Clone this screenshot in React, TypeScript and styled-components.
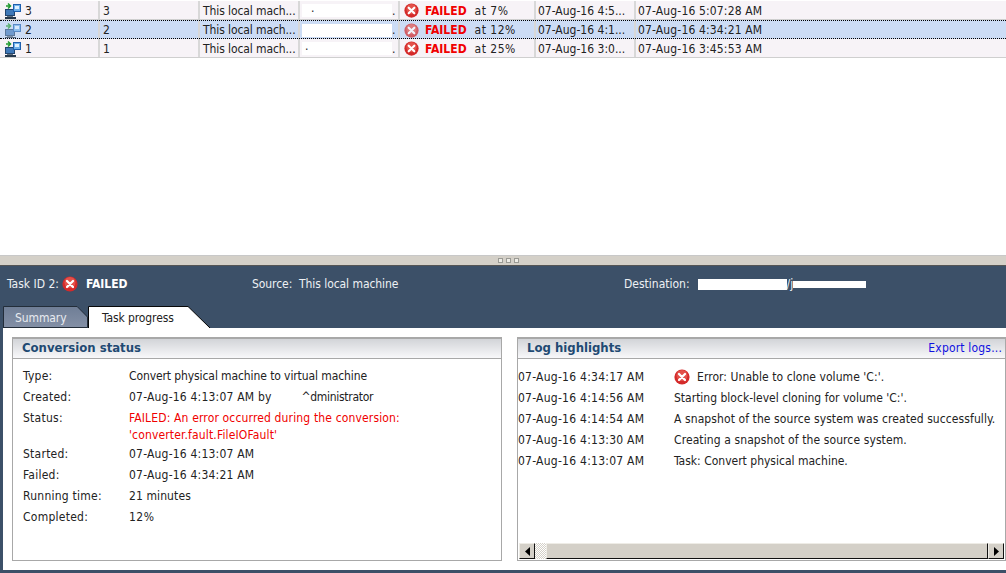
import { createGlobalStyle, styled } from "styled-components";

const GlobalStyle = createGlobalStyle`
  html, body { margin: 0; padding: 0; background: #fff; }
  body { font-family: "DejaVu Sans Condensed", "DejaVu Sans", sans-serif; font-size: 12px; color: #222; }
`;

const rows = [
  { id: "3", dot: ".", dotAt: 9, pct: "at 7%", start: "07-Aug-16 4:5...", end: "07-Aug-16 5:07:28 AM" },
  { id: "2", dot: "", dotAt: 3, pct: "at 12%", start: "07-Aug-16 4:1...", end: "07-Aug-16 4:34:21 AM", selected: true },
  { id: "1", dot: ".", dotAt: 3, pct: "at 25%", start: "07-Aug-16 3:0...", end: "07-Aug-16 3:45:53 AM" },
];

const statusRows = [
  { label: "Type:", value: "Convert physical machine to virtual machine", spacing: -0.1 },
  { label: "Created:", value: "07-Aug-16 4:13:07 AM by", spacing: 0.2, user: "^dministrator" },
  { label: "Status:", value: "FAILED: An error occurred during the conversion:\n'converter.fault.FileIOFault'", spacing: 0.15, error: true },
  { label: "Started:", value: "07-Aug-16 4:13:07 AM", spacing: 0.2 },
  { label: "Failed:", value: "07-Aug-16 4:34:21 AM", spacing: 0.2 },
  { label: "Running time:", value: "21 minutes", spacing: 0.1 },
  { label: "Completed:", value: "12%", spacing: 0.5 },
];

const logRows = [
  { time: "07-Aug-16 4:34:17 AM", text: "Error: Unable to clone volume 'C:'.", spacing: 0.06, failed: true },
  { time: "07-Aug-16 4:14:56 AM", text: "Starting block-level cloning for volume 'C:'.", spacing: 0 },
  { time: "07-Aug-16 4:14:54 AM", text: "A snapshot of the source system was created successfully.", spacing: 0.09 },
  { time: "07-Aug-16 4:13:30 AM", text: "Creating a snapshot of the source system.", spacing: 0.1 },
  { time: "07-Aug-16 4:13:07 AM", text: "Task: Convert physical machine.", spacing: 0 },
];

const FailIcon = ({ size = 15, faded = false }: { size?: number; faded?: boolean }) => (
  <svg width={size} height={size} viewBox="0 0 16 16" style={{ flex: "none", opacity: faded ? 0.7 : 1 }}>
    <circle cx="8" cy="8" r="7.6" fill="#d42a2a" />
    <circle cx="8" cy="6.500" r="5.500" fill="#ea6258" opacity="0.7" />
    <path d="M5 5l6 6M11 5l-6 6" stroke="#fff" strokeWidth="2.300" strokeLinecap="round" />
  </svg>
);

const TaskIcon = ({ faded = false }: { faded?: boolean }) => (
  <svg width="19" height="17" viewBox="0 0 19 17" style={{ flex: "none", opacity: faded ? 0.65 : 1 }}>
    <rect x="2.500" y="7.500" width="9" height="6" fill="#3f78b8" stroke="#23456e" />
    <rect x="4" y="14" width="6" height="1" fill="#5f6f80" />
    <rect x="2" y="15" width="11" height="2" fill="#26384c" />
    <rect x="10.500" y="2.500" width="7" height="7" fill="#6fb0ea" stroke="#1d5fae" />
    <rect x="12" y="4" width="4" height="3" fill="#dff0ff" />
    <path d="M3 4h4M5 1.500L7.500 4 5 6.500" fill="none" stroke="#1f9a2e" strokeWidth="1.500" />
  </svg>
);

export default function App() {
  return (
    <Page>
      <GlobalStyle />
      <JobTable>
        {rows.map((r) => (
          <JobRow key={r.id} $selected={r.selected}>
            <Cell>
              <TaskIcon faded={r.selected} />
              <IconLabel>{r.id}</IconLabel>
            </Cell>
            <Cell>{r.id}</Cell>
            <SourceCell>This local mach...</SourceCell>
            <RedactCell>
              <Smudge style={{ paddingLeft: r.dotAt }}>{r.dot}</Smudge>
              <span>.</span>
            </RedactCell>
            <StatusCell>
              <FailIcon faded={r.selected} />
              <FailedWord>FAILED</FailedWord>
              <Percent>{r.pct}</Percent>
            </StatusCell>
            <DateCell>{r.start}</DateCell>
            <DateCell $spacing={0.15}>{r.end}</DateCell>
          </JobRow>
        ))}
      </JobTable>

      <Splitter>
        <Grip />
        <Grip />
        <Grip />
      </Splitter>

      <Detail>
        <TaskHeader>
          <TaskId>
            Task ID 2:
            <FailIcon size={16} />
            <TaskState>FAILED</TaskState>
          </TaskId>
          <TaskSource>Source:&nbsp; This local machine</TaskSource>
          <TaskDest>
            Destination:
            <DestSmudge $width={89} $height={11} />
            /j
            <DestSmudge $width={73} $height={7} />
          </TaskDest>
        </TaskHeader>

        <TabBar>
          <Tab>
            <TabShape viewBox="0 0 86 22" preserveAspectRatio="none">
              <defs>
                <linearGradient id="tabFill" x1="0" y1="0" x2="0" y2="1">
                  <stop offset="0" stopColor="#6f7e96" />
                  <stop offset="1" stopColor="#8490a6" />
                </linearGradient>
              </defs>
              <path d="M0.500 22V0.500H75L85.500 11V21.500H0.500" fill="url(#tabFill)" stroke="#222c38" />
            </TabShape>
            <TabLabel $light>Summary</TabLabel>
          </Tab>
          <ActiveTab>
            <TabShape viewBox="0 0 122 23" preserveAspectRatio="none">
              <path d="M0.500 23V0.500H100L122 23Z" fill="#fff" stroke="none" />
              <path d="M0.500 23V0.500H100L122 23" fill="none" stroke="#000" />
            </TabShape>
            <TabLabel>Task progress</TabLabel>
          </ActiveTab>
        </TabBar>

        <Content>
          <Panel>
            <PanelHead>
              <PanelTitle>Conversion status</PanelTitle>
            </PanelHead>
            <StatusList>
              {statusRows.map((s) => (
                <StatusRow key={s.label} $tight={s.error}>
                  <StatusLabel>{s.label}</StatusLabel>
                  <StatusValue $error={s.error} $spacing={s.spacing}>
                    {s.value}
                  </StatusValue>
                  {s.user && <UserName>{s.user}</UserName>}
                </StatusRow>
              ))}
            </StatusList>
          </Panel>

          <Panel>
            <PanelHead>
              <PanelTitle>Log highlights</PanelTitle>
              <ExportLink>Export logs...</ExportLink>
            </PanelHead>
            <LogList>
              {logRows.map((l) => (
                <LogRow key={l.time}>
                  <LogTime>{l.time}</LogTime>
                  {l.failed && (
                    <LogIconSlot>
                      <FailIcon size={16} />
                    </LogIconSlot>
                  )}
                  <LogText $spacing={l.spacing}>{l.text}</LogText>
                </LogRow>
              ))}
            </LogList>
            <ScrollBar>
              <ScrollButton>
                <svg width="5" height="9" viewBox="0 0 5 9">
                  <path d="M5 0v9L0 4.500z" fill="#000" />
                </svg>
              </ScrollButton>
              <ScrollTrack />
              <ScrollThumb />
              <ScrollButton>
                <svg width="5" height="9" viewBox="0 0 5 9">
                  <path d="M0 0v9l5-4.500z" fill="#000" />
                </svg>
              </ScrollButton>
            </ScrollBar>
          </Panel>
        </Content>
      </Detail>
    </Page>
  );
}

const Page = styled.div`
  width: 1006px;
  height: 573px;
  display: flex;
  flex-direction: column;
  overflow: hidden;
  background: #fff;
`;

const JobTable = styled.div`
  flex: none;
  padding-top: 1px;
  box-sizing: border-box;
  border-bottom: 1px solid #c8c8c8;
  height: 256px;
`;

const JobRow = styled.div<{ $selected?: boolean }>`
  display: grid;
  grid-template-columns: 100px 100px 100px 100px 136px 100px 1fr;
  height: 19px;
  box-sizing: border-box;
  background: ${(p) => (p.$selected ? "#ccdcf5" : "#f7f3f7")};
  border-bottom: 1px ${(p) => (p.$selected ? "dotted #000" : "solid #cfcfcf")};
  border-top: ${(p) => (p.$selected ? "1px dotted #000" : "none")};
  line-height: 18px;
  color: #222;
`;

const Cell = styled.div`
  display: flex;
  align-items: center;
  padding: 1px 0 0 3px;
  border-right: 2px solid #d8d8d8;
  white-space: pre;
  overflow: hidden;
  &:last-child { border-right: none; }
`;

const IconLabel = styled.span`
  margin-left: 3px;
`;

const SourceCell = styled(Cell)`
  letter-spacing: -0.1px;
`;

const RedactCell = styled(Cell)`
  padding-left: 0;
`;

const StatusCell = styled(Cell)`
  padding-left: 4px;
`;

const DateCell = styled(Cell)<{ $spacing?: number }>`
  padding-left: 2px;
  letter-spacing: ${(p) => p.$spacing ?? 0}px;
`;

const FailedWord = styled.span`
  color: #f00000;
  font-weight: 700;
  margin: 0 8px 0 6px;
`;

const Percent = styled.span`
  letter-spacing: 0.5px;
`;

const Smudge = styled.span`
  display: block;
  width: 90px;
  height: 13px;
  line-height: 9px;
  margin-left: 2px;
  box-sizing: border-box;
  background: #fff;
`;

const Splitter = styled.div`
  height: 9px;
  flex: none;
  display: flex;
  align-items: center;
  justify-content: center;
  gap: 3px;
  padding-left: 10px;
  background: #d4d0c8;
  border-bottom: 1px solid #555;
`;

const Grip = styled.span`
  width: 5px;
  height: 5px;
  box-sizing: border-box;
  background: #eeece6;
  border: 1px solid #9a9a94;
`;

const Detail = styled.div`
  flex: 1;
  display: flex;
  flex-direction: column;
  background: #3c5068;
  padding: 0 0 3px 3px;
  min-height: 0;
`;

const TaskHeader = styled.div`
  height: 40px;
  flex: none;
  box-sizing: border-box;
  padding-bottom: 4px;
  display: flex;
  align-items: center;
  color: #eef0f4;
`;

const TaskId = styled.div`
  width: 249px;
  padding-left: 4px;
  box-sizing: border-box;
  display: flex;
  align-items: center;
  gap: 3px;
`;

const TaskState = styled.span`
  font-weight: 700;
  color: #fff;
  margin-left: 5px;
`;

const TaskSource = styled.div`
  width: 372px;
  letter-spacing: -0.06px;
`;

const TaskDest = styled.div`
  display: flex;
  align-items: center;
`;

const DestSmudge = styled.span<{ $width: number; $height: number }>`
  display: block;
  width: ${(p) => p.$width}px;
  height: ${(p) => p.$height}px;
  margin-left: ${(p) => (p.$height > 8 ? "8px" : "0")};
  background: #fff;
`;

const TabBar = styled.div`
  height: 22px;
  flex: none;
  display: flex;
`;

const Tab = styled.div`
  position: relative;
  width: 85px;
  height: 22px;
`;

const ActiveTab = styled(Tab)`
  width: 122px;
`;

const TabShape = styled.svg`
  position: absolute;
  inset: 0;
  width: 100%;
  height: 100%;
`;

const TabLabel = styled.span<{ $light?: boolean }>`
  position: relative;
  display: block;
  padding-left: ${(p) => (p.$light ? "12px" : "14px")};
  line-height: 24px;
  letter-spacing: -0.1px;
  color: ${(p) => (p.$light ? "#e8ebf0" : "#222")};
`;

const Content = styled.div`
  flex: 1;
  min-height: 0;
  display: grid;
  grid-template-columns: 490px 489px;
  column-gap: 15px;
  padding: 9px 0 9px 9px;
  background: #fff;
`;

const Panel = styled.section`
  display: flex;
  flex-direction: column;
  border: 1px solid #a8a8a8;
  border-top-width: 2px;
  min-height: 0;
  background: #fff;
`;

const PanelHead = styled.div`
  height: 19px;
  flex: none;
  box-sizing: content-box;
  display: flex;
  align-items: center;
  justify-content: space-between;
  padding: 0 3px 0 9px;
  background: linear-gradient(#d2d4d8, #f8f8fa);
  border-bottom: 1px solid #a8a8a8;
`;

const PanelTitle = styled.h2`
  margin: 0 0 2px;
  font-size: 13px;
  font-weight: 700;
  color: #1f4a73;
`;

const ExportLink = styled.a`
  margin-bottom: 2px;
  letter-spacing: 0.18px;
  color: #1010e0;
`;

const StatusList = styled.div`
  padding: 9px 0 0 10px;
`;

const StatusRow = styled.div<{ $tight?: boolean }>`
  display: flex;
  margin-bottom: ${(p) => (p.$tight ? "2px" : "4px")};
  line-height: 17px;
`;

const StatusLabel = styled.div`
  width: 106px;
  flex: none;
  letter-spacing: 0.25px;
`;

const StatusValue = styled.div<{ $error?: boolean; $spacing: number }>`
  white-space: pre-wrap;
  letter-spacing: ${(p) => p.$spacing}px;
  color: ${(p) => (p.$error ? "#f00000" : "#222")};
`;

const UserName = styled.span`
  margin-left: 30px;
  letter-spacing: -0.3px;
`;

const LogList = styled.div`
  flex: 1;
  padding-top: 7px;
`;

const LogRow = styled.div`
  display: flex;
  align-items: center;
  height: 21px;
  white-space: nowrap;
`;

const LogTime = styled.span`
  width: 156px;
  flex: none;
  letter-spacing: 0.25px;
`;

const LogIconSlot = styled.span`
  width: 23px;
  flex: none;
  display: flex;
`;

const LogText = styled.span<{ $spacing: number }>`
  letter-spacing: ${(p) => p.$spacing}px;
`;

const ScrollBar = styled.div`
  height: 16px;
  flex: none;
  display: flex;
  margin: 0 1px 1px 1px;
`;

const ScrollButton = styled.div`
  width: 16px;
  flex: none;
  box-sizing: border-box;
  display: flex;
  align-items: center;
  justify-content: center;
  background: #d4d0c8;
  border: 1px solid;
  border-color: #eeece6 #111 #111 #eeece6;
`;

const ScrollTrack = styled.div`
  width: 11px;
  flex: none;
  background: repeating-conic-gradient(#d4d0c8 0 25%, #fff 0 50%) 0 0 / 2px 2px;
`;

const ScrollThumb = styled.div`
  flex: 1;
  box-sizing: border-box;
  background: #d4d0c8;
  border: 1px solid;
  border-color: #eeece6 #111 #111 #eeece6;
`;
